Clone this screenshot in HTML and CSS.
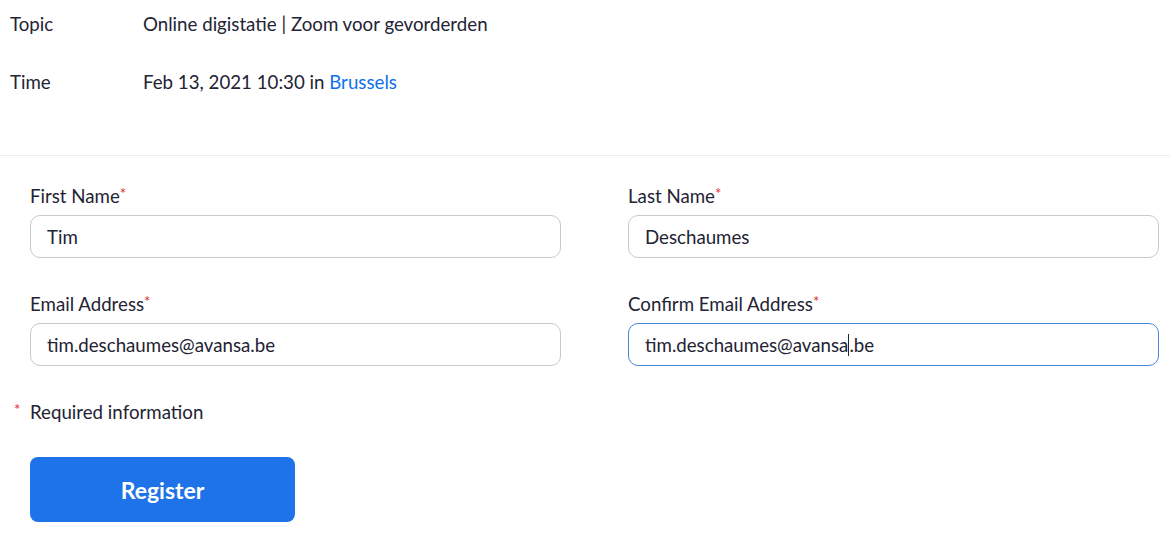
FILE: index.html
```html
<!DOCTYPE html>
<html lang="en">
<head>
<meta charset="utf-8">
<title>Register</title>
<link rel="stylesheet" href="styles.css">
</head>
<body>
<section class="info">
  <div class="info-row">
    <div class="info-label">Topic</div>
    <div class="info-value">Online digistatie | Zoom voor gevorderden</div>
  </div>
  <div class="info-row">
    <div class="info-label">Time</div>
    <div class="info-value">Feb 13, 2021 10:30 in <a class="link" href="#">Brussels</a></div>
  </div>
</section>
<form class="form">
  <div class="grid">
    <div class="field">
      <label class="label">First Name<span class="req">*</span></label>
      <div class="input">Tim</div>
    </div>
    <div class="field">
      <label class="label">Last Name<span class="req">*</span></label>
      <div class="input">Deschaumes</div>
    </div>
    <div class="field">
      <label class="label">Email Address<span class="req">*</span></label>
      <div class="input">tim.deschaumes@avansa.be</div>
    </div>
    <div class="field">
      <label class="label">Confirm Email Address<span class="req">*</span></label>
      <div class="input focus">tim.deschaumes@avansa<span class="caret"></span>.be</div>
    </div>
  </div>
  <div class="required"><span class="req-mark">*</span>Required information</div>
  <button class="btn" type="button">Register</button>
</form>
</body>
</html>
```
FILE: styles.css
```css
html, body {
  margin: 0;
  padding: 0;
  background: #fff;
}
body {
  font-family: Lato, "Open Sans", "Liberation Sans", sans-serif;
  font-size: 18.7px;
  color: #232333;
}
.info {
  padding: 12px 10px 0;
  display: flex;
  flex-direction: column;
  gap: 34px;
  border-bottom: 1px solid #ededed;
  padding-bottom: 61px;
}
.info-row {
  display: flex;
  line-height: 24px;
}
.info-label {
  width: 133px;
}
.link {
  color: #0e71eb;
  text-decoration: none;
}
.form {
  padding: 28px 11px 0 30px;
}
.grid {
  display: grid;
  grid-template-columns: 1fr 1fr;
  column-gap: 67px;
  row-gap: 34px;
}
.field {
  display: flex;
  flex-direction: column;
}
.label {
  line-height: 24px;
  margin-bottom: 7px;
}
.req {
  color: #e02828;
  font-size: 15px;
  vertical-align: top;
  line-height: 18px;
}
.input {
  height: 43px;
  box-sizing: border-box;
  border: 1px solid #c8c8cf;
  border-radius: 10px;
  padding: 0 16px;
  display: flex;
  align-items: center;
  line-height: 24px;
}
.input.focus {
  border-color: #4a86d8;
}
.caret {
  display: inline-block;
  width: 1px;
  height: 22px;
  background: #232333;
}
.required {
  margin-top: 34px;
  margin-left: -16px;
  line-height: 24px;
  display: flex;
}
.req-mark {
  color: #e02828;
  font-size: 15px;
  width: 16px;
  line-height: 18px;
}
.btn {
  margin-top: 33px;
  width: 265px;
  height: 65px;
  border: none;
  border-radius: 8px;
  background: #1f73e8;
  color: #fff;
  font-family: Lato, "Open Sans", "Liberation Sans", sans-serif;
  font-size: 23px;
  font-weight: 700;
  display: flex;
  align-items: center;
  justify-content: center;
  padding: 0;
}
```
